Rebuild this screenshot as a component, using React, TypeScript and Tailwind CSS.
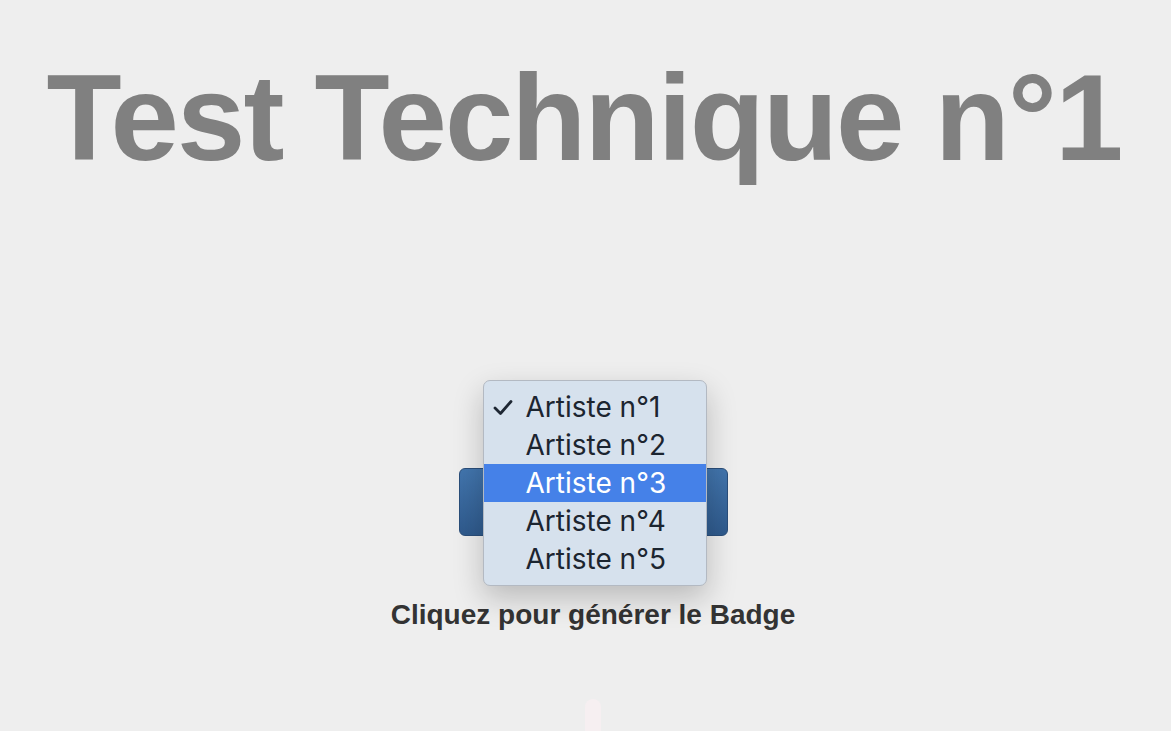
const artists = ["Artiste n°1", "Artiste n°2", "Artiste n°3", "Artiste n°4", "Artiste n°5"];

function Check() {
  return (
    <svg width="20" height="17" viewBox="0 0 20 17" fill="none">
      <path d="M2 9 L7.5 14.5 L18 2.5" stroke="#1e2733" strokeWidth="2.8" strokeLinecap="round" strokeLinejoin="round" />
    </svg>
  );
}

export default function App() {
  const selected = 0;
  const hovered = 2;
  return (
    <div className="min-h-screen w-full overflow-hidden bg-[#eeeeee] flex flex-col items-center font-['Liberation_Sans',Arial,sans-serif]">
      <h1 className="pt-[56px] text-[123px] leading-none font-bold text-[#808080] tracking-[-2px] whitespace-nowrap -ml-[3px]">
        Test Technique n°1
      </h1>

      <div className="flex flex-col items-center pl-[15px] mt-[289px]">
        <div className="relative">
          <button className="block w-[269px] h-[68px] rounded-[6px] border border-[#2a4e7a] bg-gradient-to-b from-[#4275ad] to-[#2f5a8c]" />
          <div className="absolute left-[24px] -top-[88px] w-[224px] rounded-[7px] border border-[#b3b9c2] bg-[#d6e1ed] py-[7px] shadow-[0_12px_30px_rgba(0,0,0,0.22)] font-['Inter','Noto_Sans',sans-serif]">
            {artists.map((a, i) => (
              <div
                key={a}
                className={
                  "flex items-center h-[38px] text-[28px] leading-none " +
                  (i === hovered ? "bg-[#4581e8] text-white" : "text-[#1c2530]")
                }
              >
                <span className="w-[42px] flex justify-start pl-[9px]">{i === selected ? <Check /> : null}</span>
                <span>{a}</span>
              </div>
            ))}
          </div>
        </div>

        <p className="mt-[65px] text-[28px] leading-none font-bold text-[#333333]">Cliquez pour générer le Badge</p>

        <div className="mt-[70px] w-[16px] h-[40px] rounded-t-full bg-[#f6eff1]" />
      </div>
    </div>
  );
}
